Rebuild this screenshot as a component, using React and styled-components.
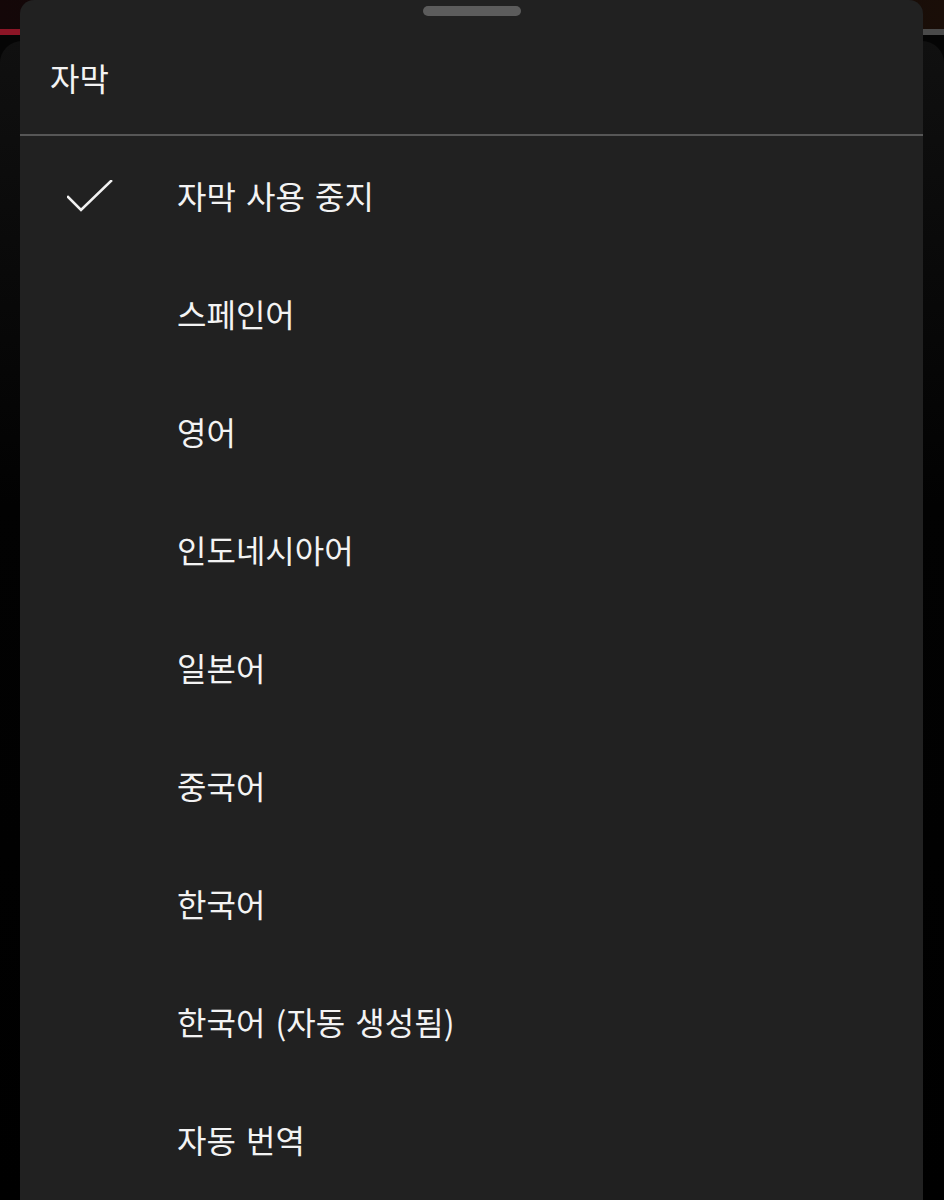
import React from "react";
import styled, { createGlobalStyle } from "styled-components";

const GlobalStyle = createGlobalStyle`
  html, body {
    margin: 0;
    padding: 0;
    background: #000;
    overflow: hidden;
  }
  body {
    font-family: "Noto Sans CJK KR", "Noto Sans", sans-serif;
  }
`;

const options = [
  { label: "자막 사용 중지", selected: true },
  { label: "스페인어" },
  { label: "영어" },
  { label: "인도네시아어" },
  { label: "일본어" },
  { label: "중국어" },
  { label: "한국어" },
  { label: "한국어 (자동 생성됨)" },
  { label: "자동 번역" },
];

function CheckIcon() {
  return (
    <svg width="46" height="32" viewBox="0 0 46 32" fill="none">
      <polyline
        points="1,17 14,30 44,1"
        stroke="#f1f1f1"
        strokeWidth="2.6"
        strokeLinecap="square"
        strokeLinejoin="miter"
      />
    </svg>
  );
}

export default function App() {
  return (
    <>
      <GlobalStyle />
      <Screen>
        {/* dimmed video page behind the sheet */}
        <Backdrop>
          <TopStrip />
          <Progress>
            <Played />
            <Buffered />
          </Progress>
          <BackdropBody>
            <Card />
          </BackdropBody>
        </Backdrop>

        <Sheet>
          <SheetHeader>
            <Handle />
            <Title>자막</Title>
          </SheetHeader>
          <OptionList>
            {options.map((o) => (
              <OptionRow key={o.label}>
                <IconCell>{o.selected && <CheckIcon />}</IconCell>
                <Label>{o.label}</Label>
              </OptionRow>
            ))}
          </OptionList>
        </Sheet>
      </Screen>
    </>
  );
}

const Screen = styled.div`
  position: relative;
  width: 944px;
  height: 1200px;
  overflow: hidden;
  background: #000;
`;

const Backdrop = styled.div`
  display: flex;
  flex-direction: column;
  height: 100%;
`;

const TopStrip = styled.div`
  height: 29px;
  background: linear-gradient(90deg, #140708 0%, #0b0b0b 50%, #1a0e08 100%);
`;

const Progress = styled.div`
  display: flex;
  height: 6px;
`;

const Played = styled.div`
  width: 40px;
  background: #8c1526;
`;

const Buffered = styled.div`
  flex: 1;
  background: #4a4a4a;
`;

const BackdropBody = styled.div`
  flex: 1;
  display: flex;
  padding: 6px 0 0;
  background: #050505;
`;

const Card = styled.div`
  flex: 1;
  border-radius: 22px 22px 0 0;
  background: linear-gradient(180deg, #101010 0%, #020202 40%, #000 100%);
`;

const Sheet = styled.div`
  position: absolute;
  top: 0;
  left: 20px;
  width: 903px;
  bottom: 0;
  background: #212121;
  border-radius: 14px 14px 0 0;
  display: flex;
  flex-direction: column;
`;

const SheetHeader = styled.div`
  display: flex;
  flex-direction: column;
  padding: 6px 0 0;
  height: 136px;
  box-sizing: border-box;
  border-bottom: 2px solid #575757;
`;

const Handle = styled.div`
  align-self: center;
  width: 98px;
  height: 10px;
  border-radius: 5px;
  background: #5c5c5c;
`;

const Title = styled.div`
  margin-top: 40px;
  padding-left: 30px;
  font-size: 32px;
  line-height: 42px;
  color: #f3f3f3;
`;

const OptionList = styled.div`
  display: flex;
  flex-direction: column;
`;

const OptionRow = styled.div`
  display: grid;
  grid-template-columns: 157px 1fr;
  align-items: center;
  height: 118px;
`;

const IconCell = styled.div`
  display: flex;
  align-items: center;
  padding-left: 47px;
  padding-top: 2px;
`;

const Label = styled.div`
  font-size: 32px;
  line-height: 42px;
  word-spacing: 3px;
  color: #f3f3f3;
`;
